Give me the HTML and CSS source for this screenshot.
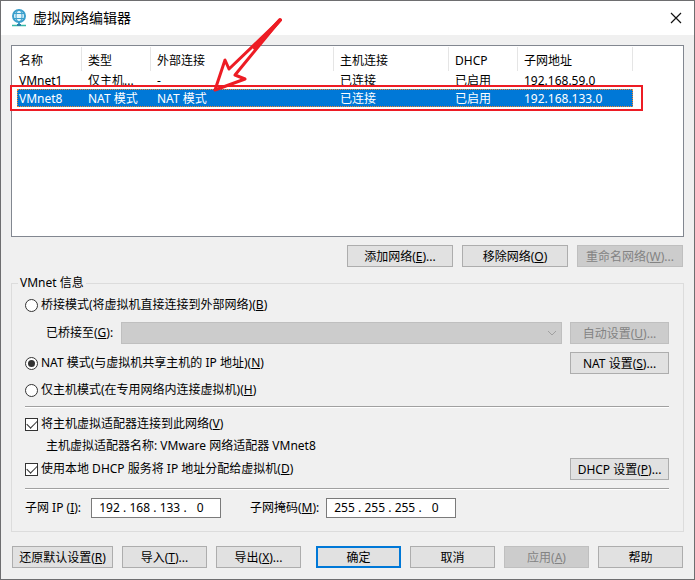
FILE: index.html
```html
<!DOCTYPE html>
<html lang="zh-CN">
<head>
    <meta charset="UTF-8">
    <meta name="viewport" content="width=device-width, initial-scale=1.0">
    <title>虚拟网络编辑器</title>
    <link rel="stylesheet" href="styles.css">
</head>
<body>

<div class="window">
    <header class="titlebar">
        <svg class="app-icon" width="16" height="18" viewBox="0 0 16 18" fill="none">
            <circle cx="8" cy="7" r="6" fill="#e4f5fb" stroke="#3a9fcc" stroke-width="2"/>
            <ellipse cx="8" cy="7" rx="3" ry="6" stroke="#3a9fcc"/>
            <path d="M2 4.5h12M2 9.5h12" stroke="#3a9fcc"/>
            <path d="M8 13v3" stroke="#3a9fcc" stroke-width="2"/>
            <path d="M1 16.5h14" stroke="#35b8a6" stroke-width="1.5"/>
            <path d="M6 16h4" stroke="#2f7fa8" stroke-width="2"/>
        </svg>
        <h1>虚拟网络编辑器</h1>
        <button class="close" aria-label="关闭">
            <svg width="12" height="12" viewBox="0 0 12 12"><path d="M1 1l10 10M11 1L1 11" stroke="#111" stroke-width="1.2"/></svg>
        </button>
    </header>

    <main class="content">
        <div class="network-list">
            <table>
                <colgroup>
                    <col class="col-name">
                    <col class="col-type">
                    <col class="col-external">
                    <col class="col-host">
                    <col class="col-dhcp">
                    <col class="col-subnet">
                </colgroup>
                <thead>
                    <tr>
                        <th>名称</th>
                        <th>类型</th>
                        <th>外部连接</th>
                        <th>主机连接</th>
                        <th>DHCP</th>
                        <th>子网地址</th>
                    </tr>
                </thead>
                <tbody>
                    <tr>
                        <td>VMnet1</td>
                        <td>仅主机...</td>
                        <td>-</td>
                        <td>已连接</td>
                        <td>已启用</td>
                        <td>192.168.59.0</td>
                    </tr>
                    <tr class="selected">
                        <td>VMnet8</td>
                        <td>NAT 模式</td>
                        <td>NAT 模式</td>
                        <td>已连接</td>
                        <td>已启用</td>
                        <td>192.168.133.0</td>
                    </tr>
                </tbody>
            </table>
            <div class="highlight-box"></div>
            <svg class="highlight-arrow" width="72" height="80" viewBox="0 0 72 80">
                <path d="M68 5L17 54L13 45L3 75L33 64L23 60Z" fill="none" stroke="#ed1c24" stroke-width="3" stroke-linejoin="round"/>
                <path d="M68 5L43 33" stroke="#ed1c24" stroke-width="4" stroke-linecap="round"/>
            </svg>
        </div>

        <div class="list-actions">
            <button class="btn">添加网络(<u>E</u>)...</button>
            <button class="btn">移除网络(<u>O</u>)</button>
            <button class="btn" disabled>重命名网络(<u>W</u>)...</button>
        </div>

        <fieldset class="info">
            <legend>VMnet 信息</legend>

            <div class="row">
                <input type="radio" name="mode" id="bridged">
                <label for="bridged">桥接模式(将虚拟机直接连接到外部网络)(<u>B</u>)</label>
            </div>
            <div class="row row-bridge">
                <label for="adapter">已桥接至(<u>G</u>):</label>
                <div class="combo">
                    <select id="adapter" disabled><option></option></select>
                    <svg width="10" height="6" viewBox="0 0 10 6"><path d="M1 1l4 4 4-4" fill="none" stroke="#a0a0a0"/></svg>
                </div>
                <button class="btn side" disabled>自动设置(<u>U</u>)...</button>
            </div>
            <div class="row row-nat">
                <input type="radio" name="mode" id="nat" checked>
                <label for="nat">NAT 模式(与虚拟机共享主机的 IP 地址)(<u>N</u>)</label>
                <button class="btn side">NAT 设置(<u>S</u>)...</button>
            </div>
            <div class="row row-host">
                <input type="radio" name="mode" id="hostonly">
                <label for="hostonly">仅主机模式(在专用网络内连接虚拟机)(<u>H</u>)</label>
            </div>

            <hr>

            <div class="row row-connect">
                <input type="checkbox" id="connect" checked>
                <label for="connect">将主机虚拟适配器连接到此网络(<u>V</u>)</label>
            </div>
            <p class="adapter-name">主机虚拟适配器名称: VMware 网络适配器 VMnet8</p>
            <div class="row row-dhcp">
                <input type="checkbox" id="dhcp" checked>
                <label for="dhcp">使用本地 DHCP 服务将 IP 地址分配给虚拟机(<u>D</u>)</label>
                <button class="btn side">DHCP 设置(<u>P</u>)...</button>
            </div>

            <hr class="hr-low">

            <div class="row row-subnet">
                <label class="ip-label" for="ip1">子网 IP (<u>I</u>):</label>
                <div class="ip-field">
                    <input id="ip1" value="192">.<input value="168" aria-label="子网 IP 2">.<input value="133" aria-label="子网 IP 3">.<input value="0" aria-label="子网 IP 4">
                </div>
                <label class="mask-label" for="mask1">子网掩码(<u>M</u>):</label>
                <div class="ip-field">
                    <input id="mask1" value="255">.<input value="255" aria-label="子网掩码 2">.<input value="255" aria-label="子网掩码 3">.<input value="0" aria-label="子网掩码 4">
                </div>
            </div>
        </fieldset>

        <footer class="footer">
            <button class="btn restore">还原默认设置(<u>R</u>)</button>
            <button class="btn">导入(<u>T</u>)...</button>
            <button class="btn">导出(<u>X</u>)...</button>
            <button class="btn default">确定</button>
            <button class="btn">取消</button>
            <button class="btn" disabled>应用(<u>A</u>)</button>
            <button class="btn">帮助</button>
        </footer>
    </main>
</div>

</body>
</html>
```
FILE: styles.css
```css
* {
    box-sizing: border-box;
}

body {
    margin: 0;
    font-family: "Noto Sans", "Noto Sans CJK SC", sans-serif;
    font-size: 12px;
    line-height: 18px;
    color: #000;
    background: #f0f0f0;
}

button,
input,
select {
    font: inherit;
    color: inherit;
    margin: 0;
}

.window {
    min-height: 100vh;
    border: 1px solid #6e6e70;
}

.titlebar {
    display: flex;
    align-items: center;
    height: 34px;
    padding: 0 12px 0 10px;
    background: #fff;
}

.titlebar h1 {
    flex: 1;
    margin: 0 0 0 6px;
    font-size: 14px;
    font-weight: normal;
}

.close {
    display: flex;
    padding: 0;
    border: none;
    background: none;
}

.content {
    padding: 10px 10px 11px;
}

/* network list */

.network-list {
    position: relative;
    height: 192px;
    padding: 1px 0 0 5px;
    border: 1px solid #828790;
    background: #fff;
}

table {
    width: 616px;
    table-layout: fixed;
    border-collapse: separate;
    border-spacing: 0;
}

.col-name {
    width: 65px;
}

.col-type,
.col-dhcp {
    width: 69px;
}

.col-external {
    width: 183px;
}

.col-host,
.col-subnet {
    width: 115px;
}

th,
td {
    padding: 0 0 0 6px;
    text-align: left;
    font-weight: normal;
    white-space: nowrap;
}

th:first-child,
td:first-child {
    padding-left: 2px;
}

th {
    height: 24px;
    padding-top: 4px;
    border-right: 1px solid #e5e5e5;
}

td {
    height: 18px;
    padding-top: 2px;
    line-height: 16px;
}

.selected {
    color: #fff;
    background: #0078d7;
    outline: 1px dotted #ff8728;
    outline-offset: -1px;
}

.highlight-box {
    position: absolute;
    top: 39px;
    left: -2px;
    width: 633px;
    height: 26px;
    border: 2px solid #ed1c24;
}

.highlight-arrow {
    position: absolute;
    top: -31px;
    left: 200px;
}

/* buttons */

.btn {
    height: 22px;
    padding: 1px 0 0;
    border: 1px solid #adadad;
    background: #e1e1e1;
    line-height: 18px;
    white-space: nowrap;
}

.btn:disabled {
    border-color: #bfbfbf;
    background: #ccc;
    color: #838383;
}

.btn.default {
    border: 2px solid #0078d7;
    line-height: 16px;
}

.list-actions {
    display: flex;
    justify-content: flex-end;
    gap: 9px;
    padding: 8px 1px 7px;
}

.list-actions .btn {
    width: 106px;
}

/* VMnet info */

.info {
    min-width: 0;
    margin: 0;
    padding: 3px 14px 13px 13px;
    border: 1px solid #dcdcdc;
}

.info legend {
    margin-left: -7px;
    padding: 0 2px;
}

.row {
    display: flex;
    align-items: center;
    height: 20px;
}

.row input[type="radio"],
.row input[type="checkbox"] {
    appearance: none;
    position: relative;
    width: 13px;
    height: 13px;
    margin-right: 3px;
    border: 1px solid #333;
    background: #fff;
}

.row input[type="radio"] {
    border-radius: 50%;
}

.row input[type="radio"]:checked::before {
    content: "";
    position: absolute;
    inset: 2px;
    border-radius: 50%;
    background: #333;
}

.row input[type="checkbox"]:checked::before {
    content: "";
    position: absolute;
    top: 1px;
    left: 1px;
    width: 9px;
    height: 5px;
    border: solid #333;
    border-width: 0 0 1px 1px;
    transform: rotate(-45deg);
}

.side {
    width: 99px;
    margin-left: auto;
}

.row-bridge {
    gap: 8px;
    height: 22px;
    margin-top: 7px;
    padding-left: 21px;
}

.row-bridge label {
    width: 67px;
    white-space: nowrap;
}

.combo {
    position: relative;
    flex: 1;
    height: 22px;
}

.combo select {
    appearance: none;
    display: block;
    width: 100%;
    height: 22px;
    border: 1px solid #bfbfbf;
    border-radius: 0;
    background: #ccc;
    opacity: 1;
}

.combo svg {
    position: absolute;
    top: 8px;
    right: 5px;
}

.row-nat {
    height: 22px;
    margin-top: 8px;
}

.row-host {
    margin-top: 6px;
}

.info hr {
    height: 2px;
    margin: 6px 0;
    border: none;
    border-top: 1px solid #a0a0a0;
    border-bottom: 1px solid #fff;
}

.info .hr-low {
    margin: 8px 0;
}

.adapter-name {
    margin: 3px 0;
    padding-left: 21px;
}

.row-dhcp {
    height: 22px;
}

.ip-label {
    width: 66px;
}

.mask-label {
    width: 76px;
    margin-left: 29px;
}

.ip-field {
    display: flex;
    width: 130px;
    height: 20px;
    padding: 0 4px;
    border: 1px solid #7a7a7a;
    background: #fff;
}

.ip-field input {
    width: 27px;
    padding: 0;
    border: none;
    background: none;
    text-align: center;
}

/* footer */

.footer {
    display: flex;
    gap: 9px;
    padding: 14px 1px 0;
}

.footer .btn {
    width: 85px;
}

.footer .restore {
    width: 101px;
}

.footer .default {
    margin-left: auto;
}
```
